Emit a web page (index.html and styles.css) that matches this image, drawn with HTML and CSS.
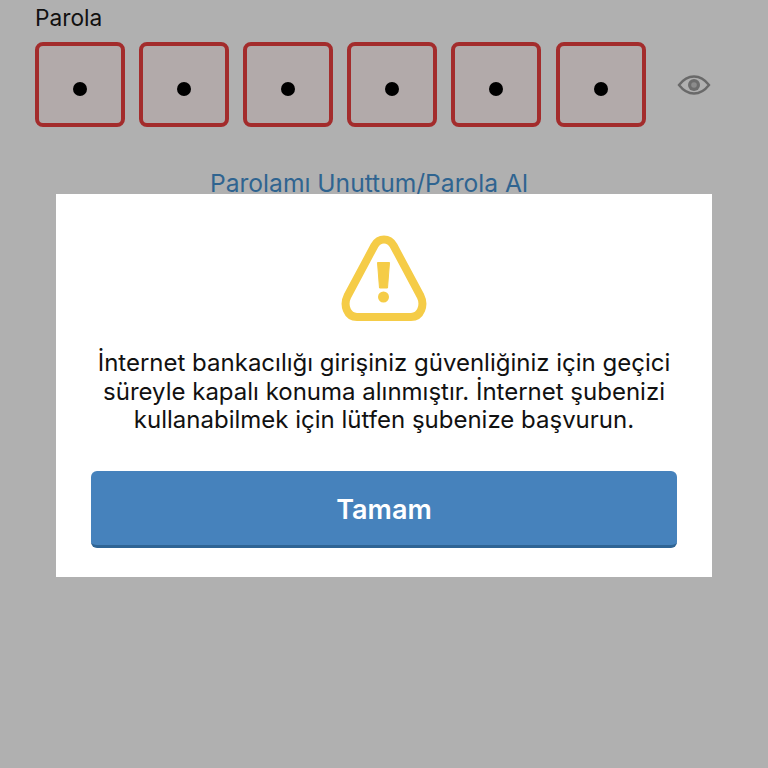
FILE: index.html
```html
<!DOCTYPE html>
<html lang="tr">
<head>
    <meta charset="UTF-8">
    <meta name="viewport" content="width=device-width, initial-scale=1.0">
    <title>Parola</title>
    <link rel="stylesheet" href="styles.css">
</head>
<body>
    <div class="login">
        <div class="field-label">Parola</div>
        <div class="pin-row">
            <div class="pin-box"><span class="pin-dot"></span></div>
            <div class="pin-box"><span class="pin-dot"></span></div>
            <div class="pin-box"><span class="pin-dot"></span></div>
            <div class="pin-box"><span class="pin-dot"></span></div>
            <div class="pin-box"><span class="pin-dot"></span></div>
            <div class="pin-box"><span class="pin-dot"></span></div>
            <svg class="eye-icon" width="34" height="24" viewBox="0 0 34 24">
                <path d="M2 12C7 5.500 12 3.500 17 3.500S27 5.500 32 12C27 18.500 22 20.500 17 20.500S7 18.500 2 12Z" fill="none" stroke="#696969" stroke-width="2.400"/>
                <circle cx="17" cy="12" r="6" fill="#6d6d6d"/>
                <circle cx="17" cy="12" r="2.800" fill="#8c8c8c"/>
            </svg>
        </div>
        <a class="forgot-link">Parolamı Unuttum/Parola Al</a>
    </div>

    <div class="modal">
        <svg class="warn-icon" width="88" height="88" viewBox="0 0 88 88">
            <path d="M44 5.500C39.500 5.500 36.500 8 34.500 11.500L7.500 62C3 71 7 83 17 83H71C81 83 85 71 80.500 62L53.500 11.500C51.500 8 48.500 5.500 44 5.500Z" fill="none" stroke="#f5cc47" stroke-width="8" stroke-linejoin="round"/>
            <path d="M37.500 28.500H49.500L47.500 54H39.500Z" fill="#f5cc47" stroke="#f5cc47" stroke-width="1" stroke-linejoin="round"/>
            <circle cx="43.500" cy="63" r="5.500" fill="#f5cc47"/>
        </svg>
        <p class="modal-text">İnternet bankacılığı girişiniz güvenliğiniz için geçici süreyle kapalı konuma alınmıştır. İnternet şubenizi kullanabilmek için lütfen şubenize başvurun.</p>
        <button class="ok-button" type="button">Tamam</button>
    </div>
</body>
</html>
```

FILE: styles.css
```css
html, body {
    height: 100%;
}
body {
    margin: 0;
    background-color: #b0b0b0;
    font-family: Inter, "Noto Sans", sans-serif;
    color: #111;
    overflow: hidden;
    position: relative;
}
.login {
    padding: 5px 0 0 35px;
    display: flex;
    flex-direction: column;
}
.field-label {
    font-size: 22.700px;
    line-height: 26px;
    height: 37px;
}
.pin-row {
    display: flex;
    align-items: center;
    gap: 14px;
}
.pin-box {
    width: 90px;
    height: 85px;
    box-sizing: border-box;
    border: 4px solid #a32c2c;
    border-radius: 8px;
    background-color: #b2aaaa;
    display: flex;
    justify-content: center;
    align-items: center;
    padding-top: 9px;
}
.pin-box:last-of-type {
    margin-left: 1px;
}
.pin-dot {
    width: 14px;
    height: 14px;
    border-radius: 50%;
    background-color: #000;
}
.eye-icon {
    margin-left: 17px;
}
.forgot-link {
    margin-top: 42px;
    margin-left: 175px;
    font-size: 24.600px;
    line-height: 28px;
    color: #2f6490;
}
.modal {
    position: absolute;
    left: 56px;
    top: 194px;
    width: 656px;
    height: 383px;
    box-sizing: border-box;
    padding: 40px 35px 0;
    background-color: #fff;
    display: flex;
    flex-direction: column;
    align-items: center;
}
.warn-icon {
    display: block;
}
.modal-text {
    margin: 27px 0 0;
    width: 100%;
    height: 122px;
    font-size: 24px;
    line-height: 28.600px;
    text-align: center;
    color: #111;
}
.ok-button {
    width: 586px;
    height: 77px;
    flex-shrink: 0;
    padding: 3px 0 0;
    border: none;
    border-bottom: 3px solid #2f6494;
    border-radius: 6px;
    background-color: #4682bc;
    color: #fff;
    font-family: inherit;
    font-size: 27px;
    font-weight: 600;
}
```
